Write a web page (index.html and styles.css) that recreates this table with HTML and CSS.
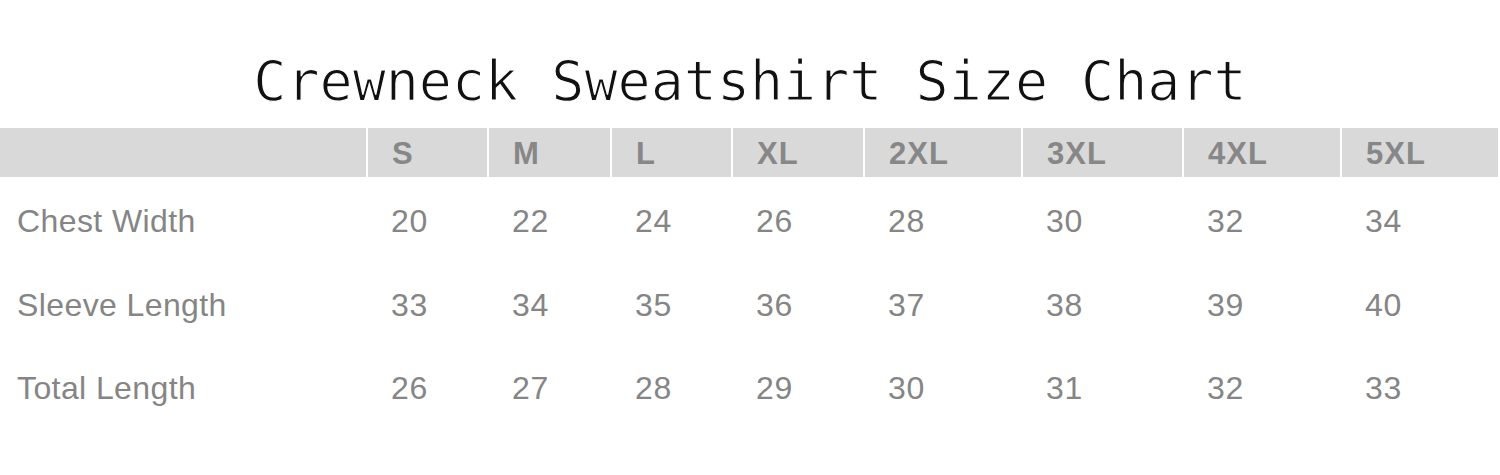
FILE: index.html
```html
<!DOCTYPE html>
<html>
<head>
<meta charset="utf-8">
<link rel="stylesheet" href="styles.css">
</head>
<body>
<div class="page">
  <h1 class="title">Crewneck Sweatshirt Size Chart</h1>
  <div class="chart">
    <div class="head blank"></div>
    <div class="head">S</div>
    <div class="head">M</div>
    <div class="head">L</div>
    <div class="head">XL</div>
    <div class="head">2XL</div>
    <div class="head">3XL</div>
    <div class="head">4XL</div>
    <div class="head">5XL</div>

    <div class="label">Chest Width</div>
    <div class="val">20</div><div class="val">22</div><div class="val">24</div><div class="val">26</div>
    <div class="val">28</div><div class="val">30</div><div class="val">32</div><div class="val">34</div>

    <div class="label">Sleeve Length</div>
    <div class="val">33</div><div class="val">34</div><div class="val">35</div><div class="val">36</div>
    <div class="val">37</div><div class="val">38</div><div class="val">39</div><div class="val">40</div>

    <div class="label">Total Length</div>
    <div class="val">26</div><div class="val">27</div><div class="val">28</div><div class="val">29</div>
    <div class="val">30</div><div class="val">31</div><div class="val">32</div><div class="val">33</div>
  </div>
</div>
</body>
</html>
```
FILE: styles.css
```css
html, body {
  margin: 0;
  padding: 0;
  background: #ffffff;
}
.page {
  width: 1500px;
  height: 475px;
  overflow: hidden;
}
.title {
  margin: 0;
  height: 128px;
  display: flex;
  align-items: center;
  justify-content: center;
  padding-top: 34px;
  box-sizing: border-box;
  font-family: "DejaVu Sans Mono", monospace;
  font-weight: normal;
  font-size: 55px;
  color: #111111;
  -webkit-text-stroke: 1.2px #ffffff;
}
.chart {
  display: grid;
  grid-template-columns: 366px 119px 121px 119px 130px 156px 159px 156px 156px;
  column-gap: 2px;
  font-family: "Liberation Sans", Arial, sans-serif;
}
.head {
  height: 49px;
  margin-bottom: 3px;
  background: #d9d9d9;
  box-sizing: border-box;
  padding: 2px 0 0 24px;
  font-weight: bold;
  font-size: 31px;
  letter-spacing: 1px;
  line-height: 47px;
  color: #878787;
}
.label, .val {
  height: 83.5px;
  line-height: 83.5px;
  font-size: 32px;
  color: #858585;
}
.label {
  padding-left: 17px;
  letter-spacing: 0.4px;
}
.val {
  padding-left: 23px;
  letter-spacing: 0.6px;
}
```
